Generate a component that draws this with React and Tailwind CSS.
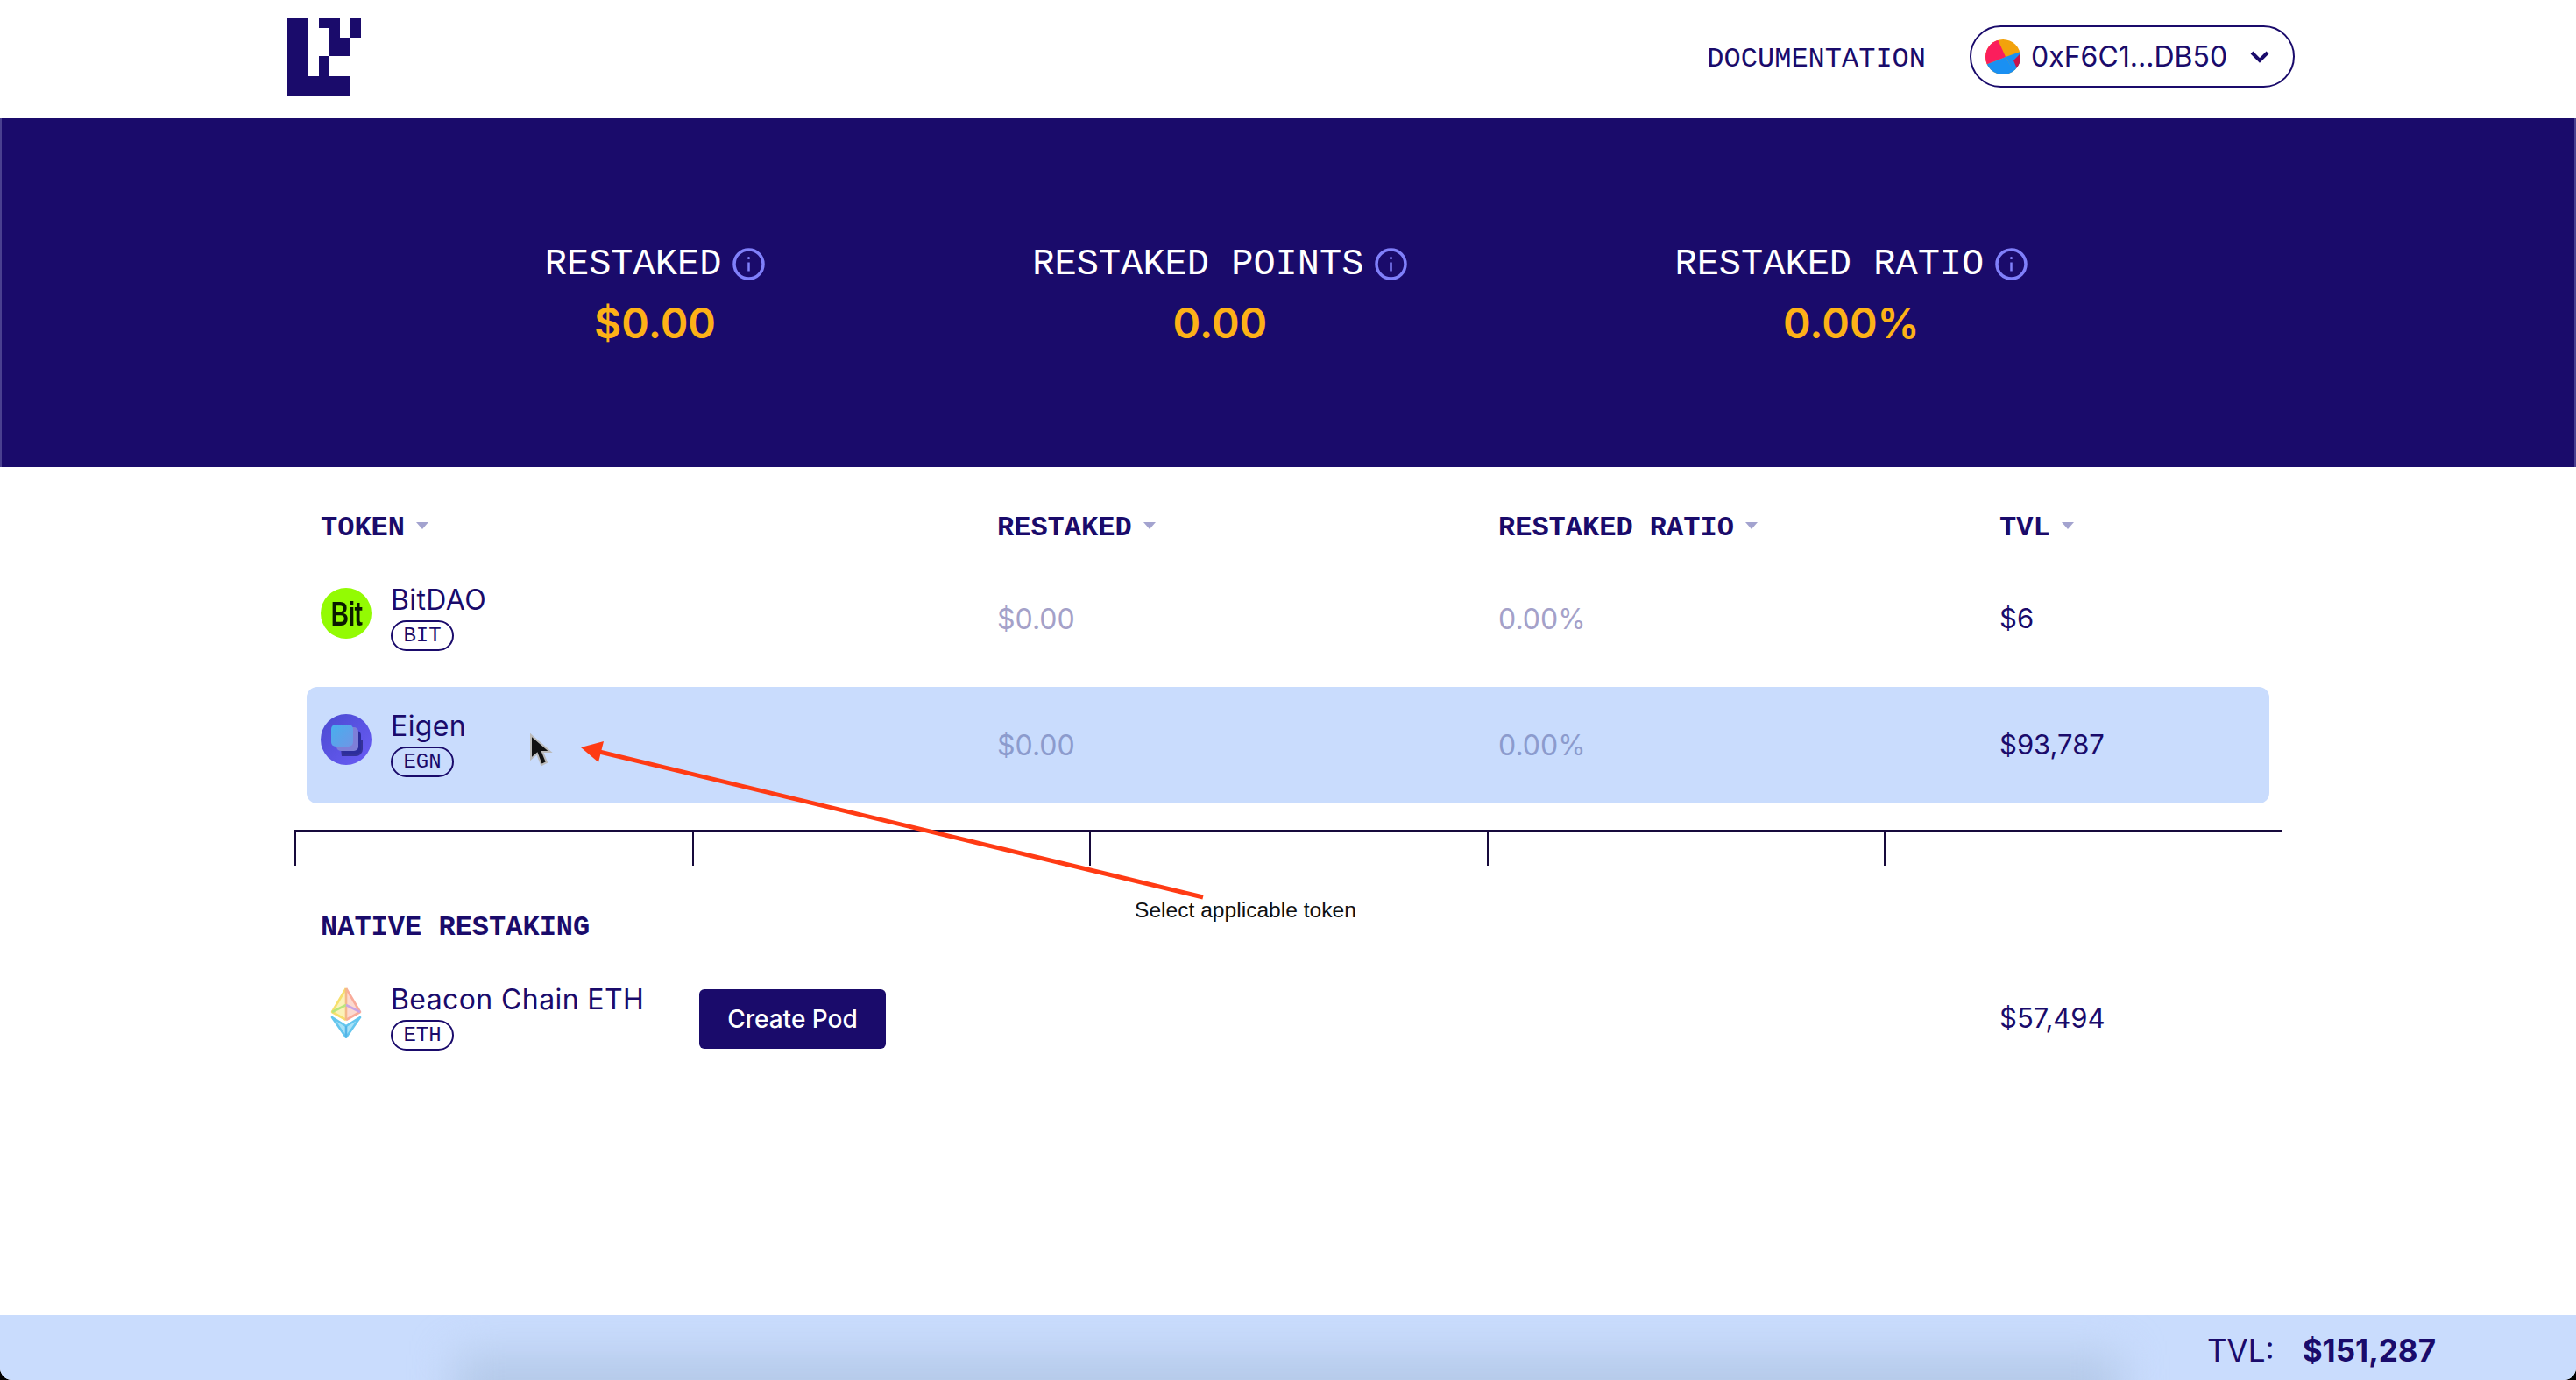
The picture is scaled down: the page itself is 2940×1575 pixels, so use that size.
import React from 'react';

const mono = "font-['Liberation_Mono',monospace]";

const Logo = () => (
  <svg width="84" height="89" viewBox="0 0 84 89" className="-mt-[6px] text-[#1a0b6b]" fill="currentColor">
    <path d="M0 0h24v67h48v22H0z" />
    <path d="M36 44h12v23H36z" />
    <path d="M36 0h24v23h12v21H48V12H36z" />
    <path d="M72 0h12v23H72z" />
  </svg>
);

const Avatar = () => (
  <svg width="40" height="40" viewBox="0 0 40 40">
    <defs>
      <clipPath id="av"><circle cx="20" cy="20" r="20" /></clipPath>
    </defs>
    <g clipPath="url(#av)">
      <rect width="40" height="40" fill="#f2a20c" />
      <path d="M0 0h14l9 20L0 29z" fill="#fb1e5c" />
      <path d="M0 29l23-9 11 19-10 6H0z" fill="#1a90f2" />
      <path d="M23 20l17-6v26h-6z" fill="#1a90f2" />
      <path d="M32 24l8-8v16l-3 4z" fill="#c7144c" />
    </g>
  </svg>
);

const InfoIcon = () => (
  <svg width="37" height="37" viewBox="0 0 37 37" fill="none">
    <circle cx="18.5" cy="18.5" r="16.5" stroke="#8080fa" strokeWidth="3.5" />
    <path d="M18.5 16.5v10" stroke="#8080fa" strokeWidth="2.5" />
    <circle cx="18.5" cy="11.5" r="1.6" fill="#8080fa" />
  </svg>
);

const Caret = () => <span className="ml-[13px] mb-[6px] w-0 h-0 border-x-[7px] border-x-transparent border-t-[8px] border-t-[#a3a3cf]" />;

const BitIcon = () => (
  <div className="w-[58px] h-[58px] mt-[5px] rounded-full bg-[#93fb03] flex items-center justify-center shrink-0">
    <span className="font-['Liberation_Sans',sans-serif] font-bold text-[39px] leading-none tracking-[-1px] text-[#0a1a00] scale-x-[0.72]">Bit</span>
  </div>
);

const EigenIcon = () => (
  <svg width="58" height="58" viewBox="0 0 58 58" className="mt-[5px] shrink-0">
    <defs>
      <linearGradient id="eg" x1="0" y1="0" x2="1" y2="1">
        <stop offset="0" stopColor="#46b0ee" />
        <stop offset="1" stopColor="#6f96e6" />
      </linearGradient>
      <linearGradient id="eb" x1="0" y1="0" x2="1" y2="1">
        <stop offset="0" stopColor="#4a4ad0" />
        <stop offset="1" stopColor="#6a5cf6" />
      </linearGradient>
    </defs>
    <circle cx="29" cy="29" r="29" fill="url(#eb)" />
    <path d="M22 30h26v10a8 8 0 0 1-8 8H24z" fill="#25267e" opacity="0.75" />
    <rect x="24" y="19" width="22" height="26" rx="5" fill="#2c2d9c" />
    <rect x="18" y="15" width="25" height="27" rx="5" fill="#7e7fd8" />
    <rect x="12" y="12" width="25" height="25" rx="5" fill="url(#eg)" />
  </svg>
);

const EthIcon = () => (
  <div className="w-[58px] h-[58px] mt-[5px] flex items-start justify-center shrink-0">
    <svg width="36" height="58" viewBox="0 0 36 58" fill="none" strokeWidth="2.6" strokeLinejoin="round">
      <path d="M18 1L2 28l16 9z" fill="#fbf2b8" />
      <path d="M18 1l16 27-16 9z" fill="#fcd9cf" />
      <path d="M18 1L2 28l16 9" stroke="#f7df6c" />
      <path d="M18 1l16 27-16 9" stroke="#f9ab9a" />
      <path d="M18 1v36" stroke="#f4b98a" />
      <path d="M2 28l16-8" stroke="#b8e67c" />
      <path d="M34 28l-16-8" stroke="#c9a4e4" />
      <path d="M2 34l16 23 16-23-16 10z" stroke="#64c6ee" fill="#a9e2f7" />
      <path d="M18 44v13" stroke="#54b5e8" />
    </svg>
  </div>
);

const Badge = ({ children }) => (
  <span className={`${mono} mt-[4px] w-[72px] h-[35px] rounded-full border-2 border-[#1a0b6b] text-[24px] leading-none flex items-center justify-center`}>
    {children}
  </span>
);

const TokenCell = ({ icon, name, symbol }) => (
  <div className="flex gap-[22px] pt-[26px]">
    {icon}
    <div className="flex flex-col items-start">
      <span className="text-[32px] leading-[38px] tracking-[0.4px] whitespace-nowrap">{name}</span>
      <Badge>{symbol}</Badge>
    </div>
  </div>
);

const Stat = ({ label, value }) => (
  <div className="flex flex-col items-center">
    <div className="flex items-center gap-[13px]">
      <span className={`${mono} pt-[2px] text-[42px] leading-[44px] text-white`}>{label}</span>
      <InfoIcon />
    </div>
    <span className="mt-[19px] text-[48px] leading-[52px] font-semibold text-[#fdb117]">{value}</span>
  </div>
);

const HeaderCell = ({ children }) => (
  <div className={`${mono} flex items-center text-[32px] leading-[40px] font-bold`}>
    {children}
    <Caret />
  </div>
);

const grid = 'grid grid-cols-[772px_572px_572px_1fr] px-[16px]';

export default function App() {
  return (
    <div className="relative w-full h-screen overflow-hidden bg-black">
      <div className="flex flex-col h-full bg-white rounded-b-[14px] overflow-hidden font-['Inter',sans-serif] text-[#1a0b6b]">
        {/* Header */}
        <header className="h-[135px] shrink-0 pl-[328px] pr-[321px] flex items-center">
          <Logo />
          <a className={`${mono} ml-auto text-[32px]`}>DOCUMENTATION</a>
          <button className="ml-[50px] -mt-[6px] w-[371px] h-[71px] rounded-[36px] border-2 border-[#1a0b6b] pl-[16px] pr-[26px] flex items-center">
            <Avatar />
            <span className="ml-[12px] text-[32px]">0xF6C1...DB50</span>
            <svg className="ml-auto" width="24" height="16" viewBox="0 0 24 16" fill="none">
              <path d="M3 3l9 9 9-9" stroke="#1a0b6b" strokeWidth="4" />
            </svg>
          </button>
        </header>

        {/* Stats */}
        <section className="h-[398px] shrink-0 bg-[#1a0b6b] border-x-2 border-[#4a4090] flex justify-center gap-[305px] pt-[143px] pr-[4px]">
          <Stat label="RESTAKED" value="$0.00" />
          <Stat label="RESTAKED POINTS" value="0.00" />
          <Stat label="RESTAKED RATIO" value="0.00%" />
        </section>

        {/* Token table */}
        <main className="w-[2240px] mx-auto">
          <div className={`${grid} pt-[50px] pb-[17px]`}>
            <HeaderCell>TOKEN</HeaderCell>
            <HeaderCell>RESTAKED</HeaderCell>
            <HeaderCell>RESTAKED RATIO</HeaderCell>
            <HeaderCell>TVL</HeaderCell>
          </div>

          <div className={`${grid} h-[133px] mb-[11px] rounded-[12px]`}>
            <TokenCell icon={<BitIcon />} name="BitDAO" symbol="BIT" />
            <span className="self-center text-[32px] text-[#a4a1c9]">$0.00</span>
            <span className="self-center text-[32px] text-[#a4a1c9]">0.00%</span>
            <span className="self-center text-[31px]">$6</span>
          </div>

          <div className={`${grid} h-[133px] rounded-[12px] bg-[#c9dcfd]`}>
            <TokenCell icon={<EigenIcon />} name="Eigen" symbol="EGN" />
            <span className="self-center text-[32px] text-[#8c9bcd]">$0.00</span>
            <span className="self-center text-[32px] text-[#8c9bcd]">0.00%</span>
            <span className="self-center text-[31px]">$93,787</span>
          </div>

          {/* Ruler */}
          <div className="mt-[30px] -mx-[14px] h-[41px] grid grid-cols-5 border-t-2 border-[#170a3c]">
            <div className="border-l-2 border-[#170a3c]" />
            <div className="border-l-2 border-[#170a3c]" />
            <div className="border-l-2 border-[#170a3c]" />
            <div className="border-l-2 border-[#170a3c]" />
            <div className="border-l-2 border-[#170a3c]" />
          </div>

          <h2 className={`${mono} mt-[51px] px-[16px] text-[32px] leading-[40px] font-bold`}>NATIVE RESTAKING</h2>

          <div className={`${grid} h-[133px] mt-[17px]`}>
            <div className="flex">
              <div className="w-[432px] shrink-0">
                <TokenCell icon={<EthIcon />} name="Beacon Chain ETH" symbol="ETH" />
              </div>
              <button className="self-center w-[213px] h-[68px] shrink-0 rounded-[6px] bg-[#1a0b6b] text-white text-[28px] font-medium">
                Create Pod
              </button>
            </div>
            <span />
            <span />
            <span className="self-center text-[31px]">$57,494</span>
          </div>
        </main>

        {/* Footer */}
        <footer className="relative mt-auto h-[74px] shrink-0 bg-[#c9dcfd] overflow-hidden flex items-center justify-end pr-[160px] pt-[6px]">
          <div className="absolute left-[520px] right-[520px] top-[45px] h-[80px] bg-[#b4c9e8] blur-[24px]" />
          <span className="relative text-[35px]">TVL:</span>
          <span className="relative ml-[32px] text-[35px] font-bold">$151,287</span>
        </footer>
      </div>

      {/* Annotation drawn over the page */}
      <svg className="absolute inset-0 pointer-events-none" width="2940" height="1575" fill="none">
        <path d="M1373 1024L680 857" stroke="#ff3b14" strokeWidth="5" />
        <path d="M663 853l26-7-6 24z" fill="#ff3b14" />
        <path d="M606 839v27l7-6 5 13 6-3-5-12h9z" fill="#111" stroke="#bbb" strokeWidth="2" />
      </svg>
      <span className="absolute left-[1295px] top-[1024px] font-['Liberation_Sans',sans-serif] text-[24.6px] leading-[30px] text-[#111]">
        Select applicable token
      </span>
    </div>
  );
}
